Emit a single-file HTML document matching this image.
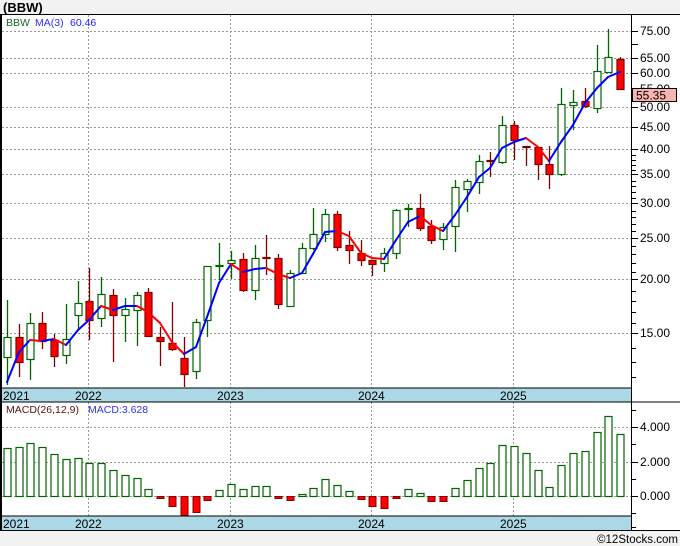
<!DOCTYPE html>
<html><head><meta charset="utf-8">
<style>
html,body{margin:0;padding:0;background:#f2f2f2;}
body{width:680px;height:546px;overflow:hidden;position:relative;font-family:"Liberation Sans",sans-serif;}
svg{position:absolute;left:0;top:0;}
</style></head><body>
<svg id="s" width="680" height="546" viewBox="0 0 680 546" xmlns="http://www.w3.org/2000/svg" font-family="Liberation Sans, sans-serif">
<rect x="0" y="0" width="680" height="546" fill="#f2f2f2"/>
<rect x="0" y="14" width="680" height="517" fill="#ffffff"/>
<text x="3" y="12" font-size="13" font-weight="bold" fill="#000">(BBW)</text>
<g id="grid"></g>
<g id="cand"></g>
<g id="ma"></g>
<g id="macd"></g>
<rect x="0" y="388" width="632" height="14" fill="#add8e6"/>
<rect x="0" y="516" width="632" height="14" fill="#add8e6"/>
<line x1="0" y1="388" x2="632" y2="388" stroke="#000" stroke-width="1"/>
<line x1="0" y1="402" x2="680" y2="402" stroke="#000" stroke-width="1"/>
<line x1="0" y1="516" x2="632" y2="516" stroke="#000" stroke-width="1"/>
<line x1="0" y1="530.5" x2="680" y2="530.5" stroke="#000" stroke-width="1"/>
<line x1="0" y1="14.5" x2="680" y2="14.5" stroke="#000" stroke-width="1"/>
<line x1="1" y1="14" x2="1" y2="531" stroke="#000" stroke-width="2"/>
<line x1="631.5" y1="14" x2="631.5" y2="531" stroke="#000" stroke-width="1"/>
<g font-size="12" fill="#000">
<text x="3" y="400">2021</text><text x="75" y="400">2022</text><text x="217" y="400">2023</text><text x="358" y="400">2024</text><text x="500" y="400">2025</text>
<text x="3" y="528">2021</text><text x="75" y="528">2022</text><text x="217" y="528">2023</text><text x="358" y="528">2024</text><text x="500" y="528">2025</text>
</g>
<text x="6" y="26" font-size="10.5" fill="#1a6a1a">BBW</text>
<text x="35" y="26" font-size="10.5" fill="#3030ff">MA(3)</text>
<text x="70" y="26" font-size="10.5" fill="#2020ff">60.46</text>
<text x="6" y="413" font-size="10.5" fill="#5a1010">MACD(26,12,9)</text>
<text x="88" y="413" font-size="10.5" fill="#3030ff">MACD:3.628</text>
<g font-size="12" fill="#000">
<text x="640" y="35">75.00</text><text x="640" y="62">65.00</text><text x="640" y="77">60.00</text>
<text x="640" y="93">55.00</text>
<text x="640" y="111">50.00</text><text x="640" y="131">45.00</text><text x="640" y="153">40.00</text>
<text x="640" y="178">35.00</text><text x="640" y="207">30.00</text><text x="640" y="242">25.00</text>
<text x="640" y="283">20.00</text><text x="640" y="337">15.00</text>
<text x="640" y="431">4.000</text><text x="640" y="466">2.000</text><text x="640" y="500">0.000</text>
</g>
<rect x="632.5" y="88.5" width="44" height="13" fill="#f8b4ae" stroke="#000" stroke-width="1"/>
<text x="636" y="99.5" font-size="12" fill="#000">55.35</text>
<text x="597" y="543" font-size="11.5" fill="#000" textLength="81" lengthAdjust="spacingAndGlyphs">©12Stocks.com</text>
</svg>
<script>
var NS="http://www.w3.org/2000/svg";
function el(p,t,a){var e=document.createElementNS(NS,t);for(var k in a)e.setAttribute(k,a[k]);document.getElementById(p).appendChild(e);return e;}
[31,44,58,73,89,107,127,149,174,203,238,279,333].forEach(function(y,i){
 if(y!=44&&y!=89) el("grid","line",{x1:2,y1:y+.5,x2:631,y2:y+.5,stroke:"#999","stroke-dasharray":"2,2","stroke-width":1});
 el("grid","line",{x1:632,y1:y+.5,x2:638,y2:y+.5,stroke:"#000"});
});
function yp(p){return 31+189*Math.log(75/p);}
[11,12,13,14,16,17,18,19,21,22,23,24,26,27,28,29,31,32,33,34,36,37,38,39].forEach(function(p){var y=Math.round(yp(p))+.5;if(y<388)el("grid","line",{x1:632,y1:y,x2:636,y2:y,stroke:"#000"});});
[427,462,496].forEach(function(y){el("grid","line",{x1:2,y1:y+.5,x2:631,y2:y+.5,stroke:"#999","stroke-dasharray":"2,2"});el("grid","line",{x1:632,y1:y+.5,x2:638,y2:y+.5,stroke:"#000"});});
[410,444,479,513,527].forEach(function(y){el("grid","line",{x1:632,y1:y+.5,x2:636,y2:y+.5,stroke:"#000"});});
[88,230,371,513].forEach(function(x){el("grid","line",{x1:x+.5,y1:15,x2:x+.5,y2:388,stroke:"#999","stroke-dasharray":"2,2"});el("grid","line",{x1:x+.5,y1:402,x2:x+.5,y2:516,stroke:"#999","stroke-dasharray":"2,2"});});
var C=[[7,300,385,337,357,'g'],[19,324,377,337,362,'r'],[30,313,380,323,359,'g'],[42,312,349,323,341,'r'],[54,334,367,340,356,'r'],[66,304,364,339,355,'g'],[78,281,330,303,315,'g'],[89,268,340,301,320,'r'],[101,277,327,294,318,'g'],[113,289,362,295,315,'r'],[125,298,342,309,315,'g'],[137,292,346,295,310,'g'],[148,288,337,292,336,'r'],[160,327,366,337,341,'r'],[172,302,351,343,349,'r'],[184,337,387,358,374,'r'],[196,319,379,322,371,'g'],[207,266,337,266,320,'g'],[219,243,280,265,266,'g'],[231,251,279,260,263,'g'],[243,253,292,259,290,'r'],[255,245,300,258,290,'g'],[266,235,275,257,258,'r'],[278,254,309,258,304,'r'],[290,270,306,273,306,'g'],[302,243,273,248,273,'g'],[313,208,250,234,248,'g'],[325,209,242,214,234,'g'],[337,211,251,214,247,'r'],[349,231,264,245,250,'r'],[361,240,266,253,260,'r'],[372,260,276,260,264,'r'],[384,248,272,253,263,'g'],[396,209,259,210,253,'g'],[408,204,227,208,209,'g'],[420,194,231,208,228,'r'],[431,220,244,226,240,'r'],[443,223,250,227,239,'g'],[455,180,252,187,226,'g'],[467,179,212,181,189,'g'],[479,155,194,161,182,'g'],[490,152,177,160,161,'r'],[502,116,164,125,162,'g'],[514,121,160,125,140,'r'],[526,147,166,146,147,'r'],[538,147,180,147,164,'r'],[549,146,189,164,174,'r'],[561,88,176,104,174,'g'],[573,90,130,102,105,'g'],[585,88,108,101,106,'r'],[597,45,113,71,108,'g'],[608,29,72,57,72,'g'],[620,57,89,59,89,'r']];
C.forEach(function(c){
 var col=c[5]=='g'?'#006400':'#800000';
 el("cand","line",{x1:c[0]+.5,y1:c[1],x2:c[0]+.5,y2:c[2],stroke:col,"stroke-width":1.3});
 var h=Math.max(c[4]-c[3],1);
 el("cand","rect",{x:c[0]-3,y:c[3]+.5,width:7,height:h,fill:c[5]=='g'?'#fff':'#ff0000',stroke:col,"stroke-width":1.2});
});
var M=[[7,382],[19,352],[30,340],[42,341],[54,339],[66,345],[78,330],[89,320],[101,306],[113,310],[125,306],[137,306],[148,312],[160,323],[172,342],[184,354],[196,347],[207,317],[219,283],[231,264],[243,272],[255,269],[266,268],[278,274],[290,278],[302,273],[313,254],[325,232],[337,231],[349,236],[361,253],[372,258],[384,259],[396,240],[408,222],[420,216],[431,225],[443,231],[455,215],[467,197],[479,177],[490,168],[502,148],[514,142],[526,138],[538,147],[549,161],[561,142],[573,125],[585,103],[597,88],[608,77],[620,72]];
for(var i=1;i<M.length;i++){el("ma","line",{x1:M[i-1][0],y1:M[i-1][1],x2:M[i][0],y2:M[i][1],stroke:M[i][1]>M[i-1][1]?'#ff0000':'#0000ff',"stroke-width":2,"stroke-linecap":"round"});}
var B=[448,447,443,447,454,459,458,463,463,470,475,478,489,-498,-506,-515,-512,-500,490,484,489,486,486,-498,-500,494,488,479,485,491,-499,-506,-508,-498,489,493,-501,-501,488,480,468,463,445,446,453,470,487,465,453,451,432,416,434];
B.forEach(function(v,i){var x=C[i][0];
 if(v>0) el("macd","rect",{x:x-3,y:v+.5,width:7,height:496-v,fill:"#fff",stroke:"#006400","stroke-width":1.2});
 else {v=-v;el("macd","rect",{x:x-3,y:496.5,width:7,height:Math.max(v-496,1),fill:"#ff0000",stroke:"#800000","stroke-width":1});}
});
</script>
</body></html>
